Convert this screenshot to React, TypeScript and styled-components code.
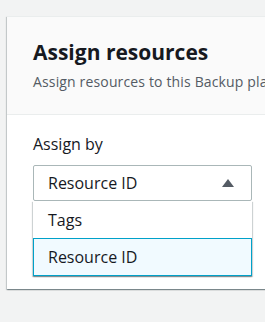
import React from "react";
import styled, { createGlobalStyle } from "styled-components";

const Global = createGlobalStyle`
  html, body { margin: 0; padding: 0; background: #f2f3f3; }
  body { font-family: "Open Sans", "Noto Sans", sans-serif; color: #16191f; }
`;

const Page = styled.div`
  padding: 16px 0 0 7px;
  width: 265px;
  height: 322px;
  box-sizing: border-box;
  overflow: hidden;
`;

const Card = styled.div`
  width: 300px;
  background: #ffffff;
  box-shadow: 0 1px 1px 0 rgba(0, 28, 36, 0.3), 1px 1px 1px 0 rgba(0, 28, 36, 0.15),
    -1px 1px 1px 0 rgba(0, 28, 36, 0.15);
  border-top: 1px solid #eaeded;
`;

const Header = styled.div`
  background: #fafafa;
  border-bottom: 1px solid #eaeded;
  padding: 21px 20px 22px 26px;
`;

const Title = styled.h2`
  margin: 0;
  font-size: 21px;
  line-height: 28px;
  font-weight: 700;
  color: #16191f;
  white-space: nowrap;
`;

const Subtitle = styled.p`
  margin: 6px 0 0;
  font-size: 14px;
  line-height: 20px;
  letter-spacing: 0.15px;
  color: #545b64;
  white-space: nowrap;
`;

const Body = styled.div`
  padding: 18px 20px 13px 26px;
`;

const Label = styled.div`
  font-size: 16px;
  line-height: 22px;
  color: #16191f;
  margin-bottom: 10px;
`;

const Field = styled.div`
  width: 219px;
  display: flex;
  flex-direction: column;
`;

const SelectBox = styled.div`
  height: 36px;
  box-sizing: border-box;
  border: 1px solid #aab7b8;
  border-radius: 2px;
  display: flex;
  align-items: center;
  justify-content: space-between;
  padding: 0 17px 0 14px;
  font-size: 16px;
  background: #fff;
`;

const List = styled.div`
  background: #fff;
  box-shadow: 0 1px 1px 0 rgba(0, 28, 36, 0.3), 1px 1px 1px 0 rgba(0, 28, 36, 0.15),
    -1px 1px 1px 0 rgba(0, 28, 36, 0.15);
  display: flex;
  flex-direction: column;
`;

const Option = styled.div<{ $active?: boolean }>`
  height: ${(p) => (p.$active ? 38 : 37)}px;
  box-sizing: border-box;
  display: flex;
  align-items: center;
  padding: 0 14px;
  font-size: 16px;
  color: #16191f;
  background: ${(p) => (p.$active ? "#f1faff" : "#fff")};
  border: 1px solid ${(p) => (p.$active ? "#00a1c9" : "transparent")};
`;

const Caret = () => (
  <svg width="12" height="8" viewBox="0 0 12 8">
    <polygon points="6,0 12,8 0,8" fill="#545b64" />
  </svg>
);

export default function App() {
  return (
    <>
      <Global />
      <Page>
        <Card>
          <Header>
            <Title>Assign resources</Title>
            <Subtitle>Assign resources to this Backup plan.</Subtitle>
          </Header>
          <Body>
            <Label>Assign by</Label>
            <Field>
              <SelectBox>
                <span>Resource ID</span>
                <Caret />
              </SelectBox>
              <List>
                <Option>Tags</Option>
                <Option $active>Resource ID</Option>
              </List>
            </Field>
          </Body>
        </Card>
      </Page>
    </>
  );
}
